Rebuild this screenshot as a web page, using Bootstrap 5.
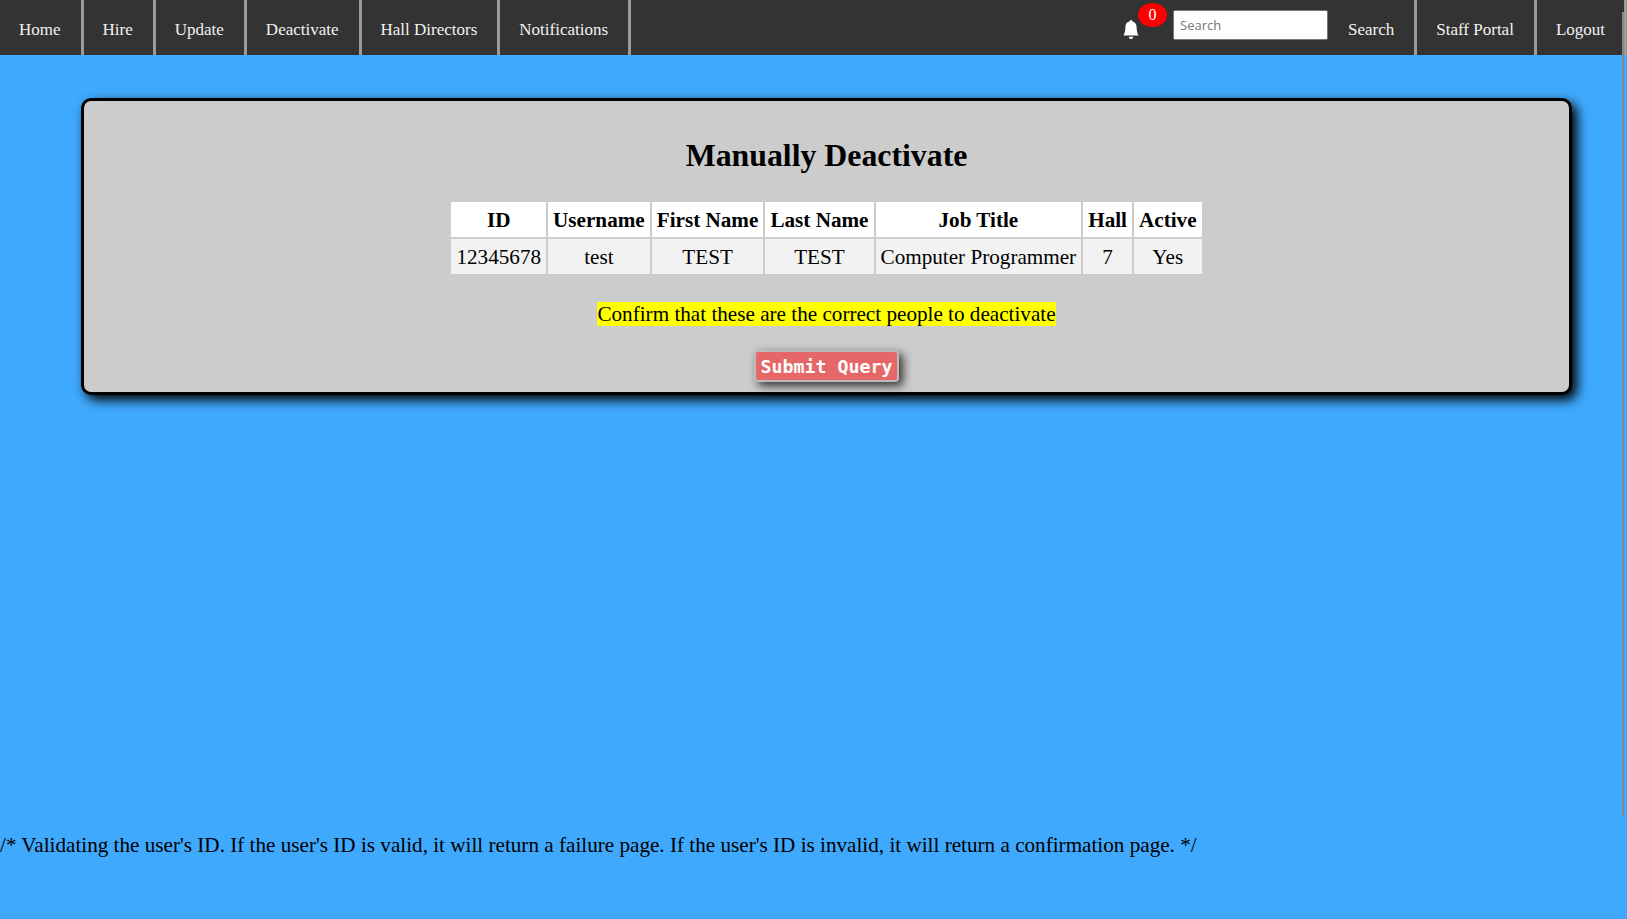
<!DOCTYPE html>
<html lang="en">
<head>
    <meta charset="UTF-8">
    <title>Manually Deactivate</title>
    <link href="https://cdn.jsdelivr.net/npm/bootstrap@5.3.3/dist/css/bootstrap.min.css" rel="stylesheet">
    <style>
        html, body {
            height: 100%;
            overflow: hidden;
        }

        body {
            font-family: "Liberation Serif", serif;
            background-color: #3fa9fd;
            color: #000;
            font-size: 21.17px;
            line-height: normal;
        }

        .top-bar {
            background: #333;
            height: 55px;
            padding: 0;
        }

        .top-link {
            display: block;
            height: 55px;
            padding: 20px 20px 0 19px;
            color: #f2f2f2;
            font-size: 17px;
            line-height: 20px;
            text-decoration: none;
            border-right: 3px solid #999;
        }

        .top-link.last-link {
            padding-right: 19px;
        }

        .bell-wrap {
            position: relative;
            width: 18px;
            height: 19px;
            margin-left: -1px;
            margin-right: 33px;
            margin-top: 3px;
        }

        .bell-wrap svg {
            display: block;
        }

        .bell-count {
            position: absolute;
            left: 16px;
            top: -17px;
            width: 29px;
            height: 24px;
            border-radius: 50%;
            background: #f00;
            color: #fff;
            font-size: 16px;
            line-height: 24px;
            text-align: center;
        }

        .search-box {
            width: 155px;
            height: 30px;
            margin-top: -5px;
            margin-right: 1px;
            padding: 1px 6px;
            font-family: "Open Sans", sans-serif;
            font-size: 13px;
            border: 1px solid #777;
            border-radius: 2px;
        }

        .search-box::placeholder {
            color: #757575;
        }

        .main-panel {
            margin: 43px 55px 0 81px;
            height: 297px;
            padding-top: 36px;
            background: #ccc;
            border: 3px solid #000;
            border-radius: 10px;
            box-shadow: 5px 5px 12px #000;
            text-align: center;
        }

        .main-panel h2 {
            font-size: 31.8px;
            font-weight: 700;
            line-height: 37px;
            margin: 0 0 26px;
        }

        .people-table {
            margin: 0 auto;
            border-collapse: separate;
            border-spacing: 2px;
        }

        .people-table th,
        .people-table td {
            padding: 6px 5px 4px;
            line-height: 25px;
            text-align: center;
        }

        .people-table th {
            background: #fff;
        }

        .people-table td {
            background: #f2f2f2;
        }

        .confirm-note {
            margin: 26px 0 23px;
            line-height: 25px;
        }

        .confirm-note span {
            background: #ff0;
        }

        .submit-query {
            width: 145px;
            height: 32px;
            padding: 0;
            font-family: "DejaVu Sans Mono", monospace;
            font-size: 18.3px;
            font-weight: 700;
            line-height: 25px;
            color: #fff;
            background: #e56767;
            border: 2px solid #bbb;
            border-radius: 4px;
            box-shadow: 4px 4px 10px #333;
        }

        .footer-note {
            margin: 438px 0 0;
            line-height: 25px;
        }

        .thin-scroll {
            position: fixed;
            top: 12px;
            right: 3px;
            width: 2px;
            height: 804px;
            background: #888;
        }
    </style>
</head>
<body>

<nav class="top-bar d-flex align-items-stretch justify-content-between">
    <div class="d-flex">
        <a class="top-link" href="#">Home</a>
        <a class="top-link" href="#">Hire</a>
        <a class="top-link" href="#">Update</a>
        <a class="top-link" href="#">Deactivate</a>
        <a class="top-link" href="#">Hall Directors</a>
        <a class="top-link" href="#">Notifications</a>
    </div>
    <div class="d-flex align-items-center">
        <div class="bell-wrap">
            <svg width="18" height="19" viewBox="0 0 16 16" preserveAspectRatio="none" fill="#fff"><path d="M8 16a2 2 0 0 0 2-2H6a2 2 0 0 0 2 2zm.995-14.901a1 1 0 1 0-1.99 0A5 5 0 0 0 3 6c0 1.098-.5 6-2 7h14c-1.5-1-2-5.902-2-7 0-2.42-1.72-4.44-4.005-4.901z"/></svg>
            <span class="bell-count">0</span>
        </div>
        <input class="search-box" type="text" placeholder="Search">
        <a class="top-link" href="#">Search</a>
        <a class="top-link" href="#">Staff Portal</a>
        <a class="top-link last-link" href="#">Logout</a>
    </div>
</nav>

<div class="main-panel">
    <h2>Manually Deactivate</h2>
    <table class="people-table">
        <tr>
            <th>ID</th><th>Username</th><th>First Name</th><th>Last Name</th><th>Job Title</th><th>Hall</th><th>Active</th>
        </tr>
        <tr>
            <td>12345678</td><td>test</td><td>TEST</td><td>TEST</td><td>Computer Programmer</td><td>7</td><td>Yes</td>
        </tr>
    </table>
    <p class="confirm-note"><span>Confirm that these are the correct people to deactivate</span></p>
    <button class="submit-query" type="button">Submit Query</button>
</div>

<p class="footer-note">/* Validating the user's ID. If the user's ID is valid, it will return a failure page. If the user's ID is invalid, it will return a confirmation page. */</p>

<div class="thin-scroll"></div>

<script src="https://cdn.jsdelivr.net/npm/bootstrap@5.3.3/dist/js/bootstrap.bundle.min.js"></script>
</body>
</html>
